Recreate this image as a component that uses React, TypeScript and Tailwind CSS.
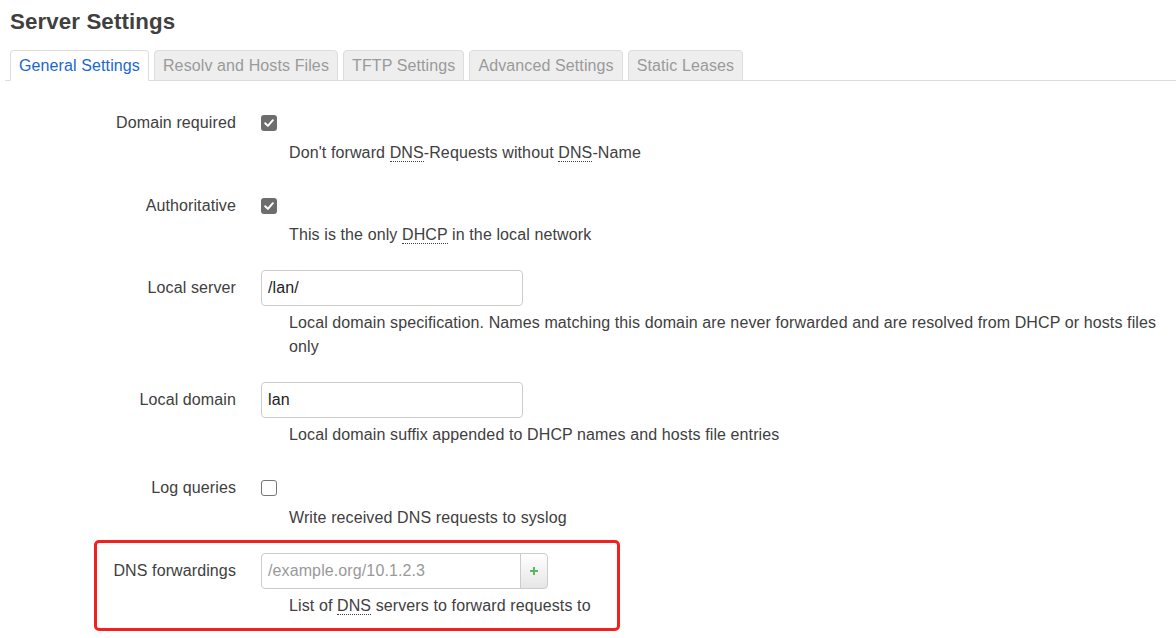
import React from "react";

const font = { fontFamily: '"Liberation Sans", Arial, sans-serif' };

function Abbr({ children }: { children: React.ReactNode }) {
  return (
    <abbr className="no-underline border-b border-dotted border-[#404040]" style={{ textDecoration: "none" }}>
      {children}
    </abbr>
  );
}

function Checkbox({ checked }: { checked: boolean }) {
  if (checked) {
    return (
      <span className="flex h-[16px] w-[16px] items-center justify-center rounded-[3px] bg-[#6d6d6d]">
        <svg width="12" height="12" viewBox="0 0 12 12" fill="none">
          <path d="M2.2 6.3 L4.9 8.9 L9.9 3.2" stroke="#fff" strokeWidth="2" strokeLinecap="round" strokeLinejoin="round" />
        </svg>
      </span>
    );
  }
  return <span className="block h-[16px] w-[16px] rounded-[3px] border border-[#767676] bg-white" />;
}

function Row({
  label,
  control,
  desc,
  descClass,
}: {
  label: string;
  control: React.ReactNode;
  desc: React.ReactNode;
  descClass: string;
}) {
  return (
    <div className="flex">
      <div className="w-[226px] shrink-0 text-right leading-[36px]">{label}</div>
      <div className="ml-[25px] flex-1">
        <div className="flex h-[36px] items-center">{control}</div>
        <div className={`${descClass} pl-[28px] leading-[24px]`}>{desc}</div>
      </div>
    </div>
  );
}

function TextInput({ value }: { value: string }) {
  return (
    <div className="flex h-[36px] w-[262px] items-center rounded-[4px] border border-[#cccccc] bg-white px-[6px] text-[16px] text-[#222]">
      {value}
    </div>
  );
}

export default function App() {
  const tabs = ["General Settings", "Resolv and Hosts Files", "TFTP Settings", "Advanced Settings", "Static Leases"];
  return (
    <div
      className="min-h-[638px] w-[1176px] overflow-hidden bg-white pl-[10px] pr-[15px] pt-[7px] text-[16px] tracking-[0.11px] text-[#404040]"
      style={font}
    >
      <h2 className="text-[22.3px] font-bold leading-[30px] text-[#404040]">Server Settings</h2>
      <div className="-mr-[15px] -ml-[5px] mt-[13px] flex gap-[5px] border-b border-[#dddddd] pl-[5px]">
        {tabs.map((t, i) =>
          i === 0 ? (
            <div
              key={t}
              className="-mb-px rounded-t-[4px] border border-[#dddddd] border-b-white bg-white px-[8px] pb-[3px] pt-[4px] leading-[22px] text-[#1a66d2]"
            >
              {t}
            </div>
          ) : (
            <div
              key={t}
              className="-mb-px rounded-t-[4px] border border-[#dddddd] bg-[#eeeeee] px-[8px] pb-[3px] pt-[4px] leading-[22px] text-[#9a9a9a]"
            >
              {t}
            </div>
          )
        )}
      </div>

      <div className="mt-[24px] flex flex-col gap-[23px]">
        <Row
          descClass="mt-0"
          label="Domain required"
          control={<Checkbox checked />}
          desc={
            <>
              Don't forward <Abbr>DNS</Abbr>-Requests without <Abbr>DNS</Abbr>-Name
            </>
          }
        />
        <Row
          descClass="-mt-px"
          label="Authoritative"
          control={<Checkbox checked />}
          desc={
            <>
              This is the only <Abbr>DHCP</Abbr> in the local network
            </>
          }
        />
        <Row
          descClass="mt-[5px]"
          label="Local server"
          control={<TextInput value="/lan/" />}
          desc="Local domain specification. Names matching this domain are never forwarded and are resolved from DHCP or hosts files only"
        />
        <Row
          descClass="mt-[5px]"
          label="Local domain"
          control={<TextInput value="lan" />}
          desc="Local domain suffix appended to DHCP names and hosts file entries"
        />
        <Row
          descClass="mt-0"
          label="Log queries"
          control={<Checkbox checked={false} />}
          desc="Write received DNS requests to syslog"
        />
        <div className="relative">
          <Row
            descClass="mt-[5px]"
            label="DNS forwardings"
            control={
              <div className="flex">
                <div className="flex h-[36px] w-[260px] items-center rounded-l-[4px] border border-[#cccccc] bg-white px-[6px] text-[#999999]">
                  /example.org/10.1.2.3
                </div>
                <div className="-ml-px flex h-[36px] w-[28px] items-center justify-center rounded-r-[4px] border border-[#cccccc] bg-gradient-to-b from-white to-[#e6e6e6]">
                  <svg width="10" height="10" viewBox="0 0 10 10">
                    <path d="M5 1 V9 M1 5 H9" stroke="#5cb85c" strokeWidth="2" />
                  </svg>
                </div>
              </div>
            }
            desc={
              <>
                List of <Abbr>DNS</Abbr> servers to forward requests to
              </>
            }
          />
          <span className="pointer-events-none absolute -bottom-[13px] -top-[13px] left-[84px] w-[526px] rounded-[5px] border-[3px] border-[#f42020]" />
        </div>
      </div>
    </div>
  );
}
